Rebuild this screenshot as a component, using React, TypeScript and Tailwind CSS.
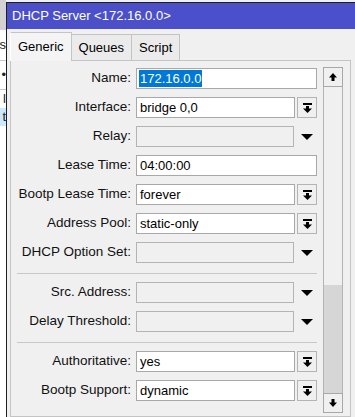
import React from "react";

function DropIcon() {
  return (
    <svg width="9" height="10" viewBox="0 0 9 10" fill="#000">
      <rect x="0" y="0" width="9" height="2" />
      <rect x="3" y="3" width="3" height="3" />
      <path d="M0 5.5H9L4.5 10Z" />
    </svg>
  );
}

function Caret() {
  return (
    <svg width="12" height="6" viewBox="0 0 12 6" fill="#000">
      <path d="M0 0H12L6 6Z" />
    </svg>
  );
}

function ScrollArrow({ down = false }: { down?: boolean }) {
  return (
    <svg width="8" height="8" viewBox="0 0 8 8" fill="#000" className={down ? "rotate-180" : ""}>
      <path d="M4 0L8 4.5H5.5V8H2.5V4.5H0Z" />
    </svg>
  );
}

function Row({ label, children }: { label: string; children: React.ReactNode }) {
  return (
    <div className="flex items-center h-[21px]">
      <div className="w-[120px] shrink-0 text-right whitespace-nowrap overflow-hidden text-[#111] text-[13.5px]">{label}</div>
      <div className="ml-[5px] flex items-center">{children}</div>
    </div>
  );
}

function TextField({ value }: { value: string }) {
  return (
    <div className="w-[181px] h-[21px] border border-[#a8a8a8] bg-white pl-[3px] leading-[19px] text-black">{value}</div>
  );
}

function ComboField({ value }: { value: string }) {
  return (
    <>
      <div className="w-[159px] h-[21px] border border-[#a8a8a8] bg-white pl-[3px] leading-[19px] text-black">{value}</div>
      <div className="ml-[2px] w-[20px] h-[21px] border border-[#b4b4b4] bg-[#f0f0f0] flex items-center justify-center">
        <DropIcon />
      </div>
    </>
  );
}

function DisabledField() {
  return (
    <>
      <div className="w-[158px] h-[21px] border border-[#b4b4b4] bg-[#f0f0f0]" />
      <div className="ml-[7px] flex items-center">
        <Caret />
      </div>
    </>
  );
}

function Separator() {
  return <div className="h-[3px] ml-[6px] w-[300px] border-b border-[#c8c8c8]" />;
}

export default function App() {
  return (
    <div className="w-[355px] h-[417px] overflow-hidden bg-[#f0f0f0] flex font-['Liberation_Sans',Arial,sans-serif] text-[13px]">
      {/* window behind the dialog */}
      <div className="w-[6px] shrink-0 flex flex-col bg-white overflow-hidden text-[#222]">
        <div className="h-[30px] bg-[#d2d2d2]" />
        <div className="h-[30px] flex justify-end items-center whitespace-nowrap">as</div>
        <div className="h-px bg-[#c8c8c8]" />
        <div className="h-[28px] flex justify-end items-center whitespace-nowrap">•</div>
        <div className="h-px bg-[#c8c8c8]" />
        <div className="h-[18px] flex justify-end items-center whitespace-nowrap">l</div>
        <div className="h-[18px] bg-[#cce8ff] flex justify-end items-center whitespace-nowrap">t</div>
      </div>

      {/* dialog */}
      <div className="flex-1 mt-[2px] border-l border-t border-[#1e1e1e] flex flex-col">
        <div className="h-[26px] shrink-0 bg-[#4b4fc9] text-white pl-[5px] leading-[26px] whitespace-nowrap">
          DHCP Server &lt;172.16.0.0&gt;
        </div>

        <div className="h-[31px] shrink-0 flex items-end pl-[3px]">
          <div className="h-[29px] px-[7px] border-t border-l border-r border-[#c4c4c4] border-l-white bg-[#f4f4f4] leading-[27px] relative -mb-px z-10">
            Generic
          </div>
          <div className="h-[26px] px-[7px] border-t border-r border-[#c4c4c4] bg-[#ebebeb] leading-[26px]">Queues</div>
          <div className="h-[26px] px-[7px] border-t border-r border-[#c4c4c4] bg-[#ebebeb] leading-[26px]">Script</div>
        </div>

        <div className="ml-[3px] w-[341px] flex-1 border border-[#c4c4c4] bg-[#f0f0f0] flex">
          <div className="w-[306px] shrink-0 pt-[7px] flex flex-col gap-[8px]">
            <Row label="Name:">
              <div className="w-[181px] h-[21px] border border-[#a8a8a8] bg-white pl-[2px] flex items-center">
                <span className="bg-[#0078d7] text-white leading-[17px] px-px">172.16.0.0</span>
              </div>
            </Row>
            <Row label="Interface:">
              <ComboField value="bridge 0,0" />
            </Row>
            <Row label="Relay:">
              <DisabledField />
            </Row>
            <Row label="Lease Time:">
              <TextField value="04:00:00" />
            </Row>
            <Row label="Bootp Lease Time:">
              <ComboField value="forever" />
            </Row>
            <Row label="Address Pool:">
              <ComboField value="static-only" />
            </Row>
            <Row label="DHCP Option Set:">
              <DisabledField />
            </Row>
            <Separator />
            <Row label="Src. Address:">
              <DisabledField />
            </Row>
            <Row label="Delay Threshold:">
              <DisabledField />
            </Row>
            <Separator />
            <Row label="Authoritative:">
              <ComboField value="yes" />
            </Row>
            <Row label="Bootp Support:">
              <ComboField value="dynamic" />
            </Row>
          </div>

          <div className="ml-[6px] mt-[6px] w-[20px] h-[346px] shrink-0 flex flex-col">
            <div className="h-[20px] border border-[#a8a8a8] bg-[#f0f0f0] flex items-center justify-center">
              <ScrollArrow />
            </div>
            <div className="h-[198px] border-l border-r border-[#b4b4b4] bg-[#f0f0f0]" />
            <div className="h-[108px] border-l border-r border-[#b4b4b4] bg-[#d6d6d6]" />
            <div className="h-[20px] border border-[#a8a8a8] bg-[#f0f0f0] flex items-center justify-center">
              <ScrollArrow down />
            </div>
          </div>
        </div>
      </div>
    </div>
  );
}
